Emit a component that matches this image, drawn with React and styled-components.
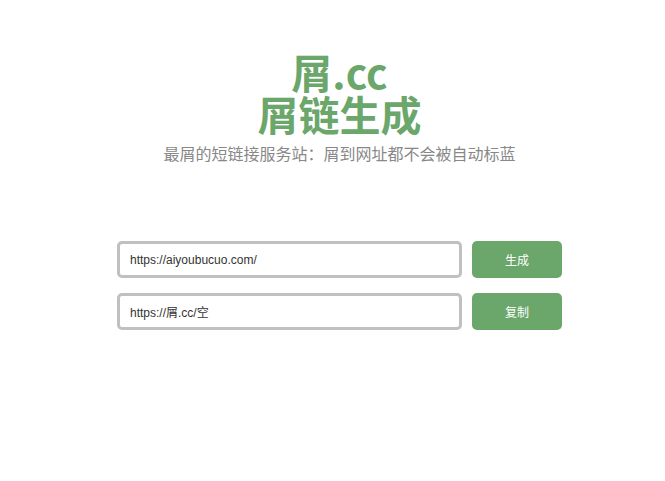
import React from "react";
import styled, { createGlobalStyle } from "styled-components";

const green = "#6ba66b";

const GlobalStyle = createGlobalStyle`
  body {
    margin: 0;
    background: #ffffff;
    font-family: "Liberation Sans", "Noto Sans CJK SC", sans-serif;
  }
`;

const Page = styled.div`
  display: flex;
  flex-direction: column;
  align-items: center;
  padding: 50px 0 0 14px;
`;

const Title = styled.h1`
  margin: 0;
  display: flex;
  flex-direction: column;
  align-items: center;
  color: ${green};
  font-family: "Noto Sans CJK SC", "Noto Sans", sans-serif;
  font-weight: 700;
  font-size: 41px;
`;

const TitleLine = styled.span`
  display: block;
  height: 42px;
  line-height: 42px;
`;

const Subtitle = styled.p`
  margin: 8px 0 0;
  color: #888888;
  font-family: "Noto Sans CJK SC", sans-serif;
  font-size: 16px;
  line-height: 22px;
`;

const Form = styled.div`
  display: flex;
  flex-direction: column;
  gap: 15px;
  margin-top: 77px;
`;

const Row = styled.div`
  display: flex;
  gap: 10px;
`;

const Field = styled.input`
  box-sizing: border-box;
  width: 345px;
  height: 37px;
  padding: 0 10px;
  border: 3px solid #c0c0c0;
  border-radius: 5px;
  font-family: "Liberation Sans", "Noto Sans CJK SC", sans-serif;
  font-size: 12px;
  color: #333333;
  outline: none;
`;

const Button = styled.button`
  width: 90px;
  height: 37px;
  border: none;
  border-radius: 5px;
  background: ${green};
  color: #ffffff;
  font-family: "Noto Sans CJK SC", sans-serif;
  font-size: 12px;
  cursor: pointer;
`;

export default function App() {
  return (
    <>
      <GlobalStyle />
      <Page>
        <Title>
          <TitleLine>屑.cc</TitleLine>
          <TitleLine>屑链生成</TitleLine>
        </Title>
        <Subtitle>最屑的短链接服务站：屑到网址都不会被自动标蓝</Subtitle>
        <Form>
          <Row>
            <Field defaultValue="https://aiyoubucuo.com/" />
            <Button>生成</Button>
          </Row>
          <Row>
            <Field defaultValue="https://屑.cc/空" readOnly />
            <Button>复制</Button>
          </Row>
        </Form>
      </Page>
    </>
  );
}
